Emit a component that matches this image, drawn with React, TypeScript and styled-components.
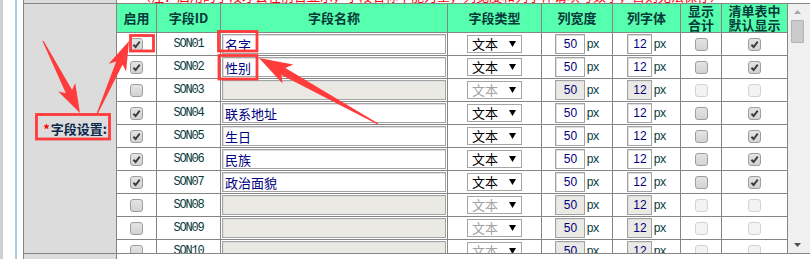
import React from 'react'
import styled, { createGlobalStyle } from 'styled-components'

const GlobalStyle = createGlobalStyle`
  html, body {
    margin: 0;
    padding: 0;
    background: #fff;
    overflow: hidden;
  }
  body {
    font-family: "Noto Sans CJK SC", "Liberation Sans", sans-serif;
  }
`

const LINE = '#858585'
const HEAD_TEXT = '#073a3a'
const COLS = '40px 64px 227px 94px 71px 68px 41px 66px'
const CJK = '"Noto Sans CJK SC", "Liberation Sans", sans-serif'
const MONO = '"Liberation Mono", "DejaVu Sans Mono", monospace'

type Field = { id: string; on: boolean; name: string }

const fields: Field[] = [
  { id: 'SON01', on: true, name: '名字' },
  { id: 'SON02', on: true, name: '性别' },
  { id: 'SON03', on: false, name: '' },
  { id: 'SON04', on: true, name: '联系地址' },
  { id: 'SON05', on: true, name: '生日' },
  { id: 'SON06', on: true, name: '民族' },
  { id: 'SON07', on: true, name: '政治面貌' },
  { id: 'SON08', on: false, name: '' },
  { id: 'SON09', on: false, name: '' },
  { id: 'SON10', on: false, name: '' },
]

const Page = styled.div`
  position: relative;
  width: 810px;
  height: 259px;
  overflow: hidden;
  display: flex;
`

const Gutter = styled.div`
  width: 23px;
  flex: none;
  background: linear-gradient(to right, #cfcfcf 0 3px, #fff 3px 15px, #a9c9ea 15px 17px, #fff 17px);
`

const FormTable = styled.div`
  flex: 1;
  border-left: 1px solid ${LINE};
  display: flex;
  flex-direction: column;
`

const FormRow = styled.div<{ $h?: number }>`
  display: grid;
  grid-template-columns: 93px 1fr;
  box-sizing: border-box;
  border-bottom: 1px solid ${LINE};
  height: ${(p) => (p.$h ? `${p.$h}px` : 'auto')};
  flex: none;
`

const LabelCell = styled.div`
  background: #dcdcdc;
  border-right: 1px solid ${LINE};
  display: flex;
  align-items: center;
  justify-content: flex-end;
  padding-right: 9px;
  font: bold 13px ${CJK};
  color: #0c2b4c;
`

const Star = styled.span`
  color: #ff0000;
  margin-right: 1px;
`

const ValueCell = styled.div`
  overflow: hidden;
  min-width: 0;
`

const Notice = styled.div`
  height: 3px;
  overflow: hidden;
  padding-left: 21px;
  div {
    margin-top: -11px;
    line-height: 13px;
    font: 13px/13px ${CJK};
    color: #ff0000;
    white-space: nowrap;
  }
`

const FieldArea = styled.div`
  display: flex;
  height: 249px;
`

const Viewport = styled.div`
  width: 671px;
  flex: none;
  overflow: hidden;
`

const GridRow = styled.div<{ $h: number }>`
  display: grid;
  grid-template-columns: ${COLS};
  height: ${(p) => p.$h}px;
  box-sizing: border-box;
  border-bottom: 1px solid ${LINE};
`

const HeadCell = styled.div`
  background: #56ffae;
  border-right: 1px solid ${LINE};
  display: flex;
  align-items: center;
  justify-content: center;
  text-align: center;
  font: bold 13px/14px ${CJK};
  color: ${HEAD_TEXT};
`

const Cell = styled.div`
  border-right: 1px solid ${LINE};
  display: flex;
  align-items: center;
  justify-content: center;
  min-width: 0;
`

const Code = styled.span`
  font: 12px ${MONO};
  letter-spacing: -1.2px;
  color: ${HEAD_TEXT};
`

const Box = styled.span<{ $off?: boolean }>`
  width: 13px;
  height: 13px;
  box-sizing: border-box;
  border-radius: 3px;
  border: 1px solid ${(p) => (p.$off ? '#d2d2d2' : '#9d9d9d')};
  background: ${(p) => (p.$off ? '#f3f3f3' : 'linear-gradient(#e4e4e4, #d2d2d2)')};
  display: inline-flex;
  align-items: center;
  justify-content: center;
`

const NameInput = styled.input<{ $off?: boolean }>`
  width: 224px;
  height: 20px;
  margin: 0;
  box-sizing: border-box;
  border: 1px solid #a3a3a3;
  box-shadow: inset 1px 1px 0 #dedede;
  background: ${(p) => (p.$off ? '#ebe9e3' : '#fff')};
  color: #000080;
  font: 13px ${CJK};
  padding: 0 2px;
  outline: none;
`

const SelectBox = styled.div<{ $off?: boolean }>`
  width: 55px;
  height: 18px;
  box-sizing: border-box;
  border: 1px solid #a5a5a5;
  background: #fff;
  display: flex;
  align-items: center;
  padding: 0 5px 0 4px;
  font: 13px/16px ${CJK};
  color: ${(p) => (p.$off ? '#a3a3a3' : '#000')};
  svg {
    margin-left: auto;
  }
`

const NumInput = styled.input<{ $w: number; $off?: boolean }>`
  width: ${(p) => p.$w}px;
  height: 20px;
  margin: 0;
  box-sizing: border-box;
  border: 1px solid #a3a3a3;
  box-shadow: inset 1px 1px 0 #dedede;
  background: ${(p) => (p.$off ? '#ebe9e3' : '#fff')};
  color: #000080;
  font: 12px "Liberation Sans", Arial, sans-serif;
  text-align: center;
  padding: 0;
  outline: none;
`

const Unit = styled.span`
  font: 12px ${MONO};
  letter-spacing: -1.2px;
  color: ${HEAD_TEXT};
  margin-left: 1px;
  padding-top: 2px;
`

const ScrollTrack = styled.div`
  flex: 1;
  background: #f0f0f0;
  display: flex;
  flex-direction: column;
  padding-left: 1px;
`

const ScrollButton = styled.div<{ $h: number }>`
  width: 17px;
  height: ${(p) => p.$h}px;
  display: flex;
  align-items: center;
  justify-content: center;
  flex: none;
`

const Thumb = styled.div`
  width: 13px;
  height: 23px;
  margin-left: 2px;
  box-sizing: border-box;
  background: #cbcbcb;
  border: 1px solid #b3b3b3;
  border-radius: 1px;
`

const Spacer = styled.div`
  flex: 1;
`

const Radio = styled.span`
  display: inline-block;
  width: 13px;
  height: 13px;
  box-sizing: border-box;
  border-radius: 50%;
  border: 1px solid #a3a3a3;
  background: #f2f2f2;
  margin: 3px 0 0 6px;
`

const Overlay = styled.svg`
  position: absolute;
  left: 0;
  top: 0;
  pointer-events: none;
`

const Check = ({ on, off }: { on?: boolean; off?: boolean }) => (
  <Box $off={off}>
    {on && (
      <svg width="9" height="9" viewBox="0 0 10 10">
        <path d="M1.6 5.3 L4 7.8 L8.6 1.8" stroke="#3b3b3b" strokeWidth="2.1" fill="none" />
      </svg>
    )}
  </Box>
)

const arrow = (x1: number, y1: number, x2: number, y2: number, hl: number, hw: number, sw: number) => {
  const len = Math.hypot(x2 - x1, y2 - y1)
  const ux = (x2 - x1) / len
  const uy = (y2 - y1) / len
  const nx = -uy
  const ny = ux
  const bx = x2 - ux * hl
  const by = y2 - uy * hl
  const wx = x2 - ux * (hl + 5)
  const wy = y2 - uy * (hl + 5)
  const pts = [
    [x1 + nx * 0.6, y1 + ny * 0.6],
    [bx + (nx * sw) / 2, by + (ny * sw) / 2],
    [wx + (nx * hw) / 2, wy + (ny * hw) / 2],
    [x2, y2],
    [wx - (nx * hw) / 2, wy - (ny * hw) / 2],
    [bx - (nx * sw) / 2, by - (ny * sw) / 2],
    [x1 - nx * 0.6, y1 - ny * 0.6],
  ]
  return pts.map((p) => p.map((v) => v.toFixed(1)).join(',')).join(' ')
}

const Annotations = () => (
  <Overlay width="810" height="259" viewBox="0 0 810 259">
    <g fill="none" stroke="#ff3b3b" strokeWidth="2.8">
      <rect x="130.5" y="35.5" width="23" height="15.5" />
      <rect x="218.5" y="31.5" width="38.5" height="19.5" />
      <rect x="219" y="55.5" width="38" height="23.5" />
      <rect x="36.5" y="114.5" width="73" height="24.5" />
    </g>
    <g fill="#ff3b3b">
      <polygon points={arrow(43, 41, 80, 113, 24, 19, 7)} />
      <polygon points={arrow(97, 114, 129, 41, 24, 19, 7)} />
      <polygon points={arrow(378, 124, 259, 58, 28, 22, 8)} />
    </g>
  </Overlay>
)

const FieldRow = ({ f }: { f: Field }) => (
  <GridRow $h={23}>
    <Cell>
      <Check on={f.on} />
    </Cell>
    <Cell>
      <Code>{f.id}</Code>
    </Cell>
    <Cell>
      <NameInput $off={!f.on} value={f.name} readOnly />
    </Cell>
    <Cell>
      <SelectBox $off={!f.on}>
        文本
        <svg width="7" height="6" viewBox="0 0 7 6">
          <polygon points="0,0 7,0 3.5,6" fill="#000" />
        </svg>
      </SelectBox>
    </Cell>
    <Cell>
      <NumInput $w={30} $off={!f.on} value="50" readOnly />
      <Unit>px</Unit>
    </Cell>
    <Cell>
      <NumInput $w={25} $off={!f.on} value="12" readOnly />
      <Unit>px</Unit>
    </Cell>
    <Cell>
      <Check off={!f.on} />
    </Cell>
    <Cell>
      <Check on={f.on} off={!f.on} />
    </Cell>
  </GridRow>
)

const FieldTable = () => (
  <FieldArea>
    <Viewport>
      <GridRow $h={29}>
        <HeadCell>启用</HeadCell>
        <HeadCell>字段ID</HeadCell>
        <HeadCell>字段名称</HeadCell>
        <HeadCell>字段类型</HeadCell>
        <HeadCell>列宽度</HeadCell>
        <HeadCell>列字体</HeadCell>
        <HeadCell>
          显示
          <br />
          合计
        </HeadCell>
        <HeadCell>
          清单表中
          <br />
          默认显示
        </HeadCell>
      </GridRow>
      {fields.map((f) => (
        <FieldRow key={f.id} f={f} />
      ))}
    </Viewport>
    <ScrollTrack>
      <ScrollButton $h={16}>
        <svg width="7" height="4" viewBox="0 0 7 4">
          <polygon points="0,4 7,4 3.5,0" fill="#a6a6a6" />
        </svg>
      </ScrollButton>
      <Thumb />
      <Spacer />
      <ScrollButton $h={16}>
        <svg width="7" height="4" viewBox="0 0 7 4">
          <polygon points="0,0 7,0 3.5,4" fill="#4f4f4f" />
        </svg>
      </ScrollButton>
    </ScrollTrack>
  </FieldArea>
)

export default function App() {
  return (
    <Page>
      <GlobalStyle />
      <Gutter />
      <FormTable>
        <FormRow $h={4}>
          <LabelCell />
          <ValueCell>
            <Notice>
              <div>（注：启用的字段才会在前台显示，字段名称不能为空，列宽度和列字体请填写数字，否则无法保存）</div>
            </Notice>
          </ValueCell>
        </FormRow>
        <FormRow>
          <LabelCell>
            <Star>*</Star>字段设置:
          </LabelCell>
          <ValueCell>
            <FieldTable />
          </ValueCell>
        </FormRow>
        <FormRow>
          <LabelCell />
          <ValueCell>
            <Radio />
          </ValueCell>
        </FormRow>
      </FormTable>
      <Annotations />
    </Page>
  )
}
